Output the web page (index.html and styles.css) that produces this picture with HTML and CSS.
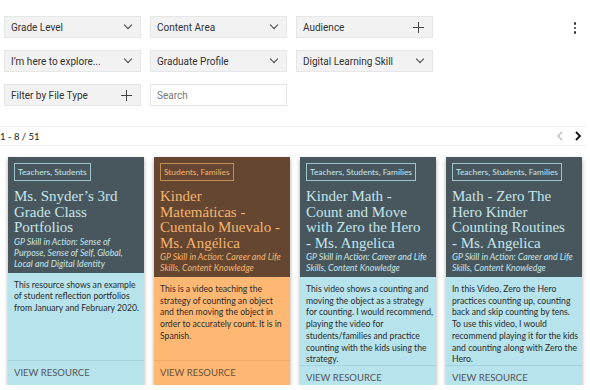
FILE: index.html
```html
<!DOCTYPE html>
<html lang="en">
<head>
  <meta charset="UTF-8">
  <meta name="viewport" content="width=device-width, initial-scale=1.0">
  <title>Resource Library</title>
  <link rel="stylesheet" href="styles.css">
</head>
<body>
  <div class="toolbar">
    <div class="filters">
      <div class="filter">Grade Level <span class="chev"></span></div>
      <div class="filter">Content Area <span class="chev"></span></div>
      <div class="filter">Audience <span class="plus"></span></div>
      <div class="filter">I’m here to explore... <span class="chev"></span></div>
      <div class="filter">Graduate Profile <span class="chev"></span></div>
      <div class="filter">Digital Learning Skill <span class="chev"></span></div>
      <div class="filter">Filter by File Type <span class="plus"></span></div>
      <input class="search" type="text" placeholder="Search">
    </div>
    <div class="kebab"><i></i><i></i><i></i></div>
  </div>

  <div class="pager">
    <span>1 - 8 / 51</span>
    <div class="arrows">
      <svg width="8" height="10" viewBox="0 0 8 10"><path d="M6 1 L2 5 L6 9" fill="none" stroke="#bbb" stroke-width="1.4"/></svg>
      <svg width="8" height="10" viewBox="0 0 8 10"><path d="M2 1 L6 5 L2 9" fill="none" stroke="#111" stroke-width="1.8"/></svg>
    </div>
  </div>

  <div class="cards">
    <div class="card">
      <div class="card-head">
        <span class="tag">Teachers, Students</span>
        <h3>Ms. Snyder’s 3rd Grade Class Portfolios</h3>
        <p class="skill">GP Skill in Action: Sense of Purpose, Sense of Self, Global, Local and Digital Identity</p>
      </div>
      <div class="card-body">
        <p>This resource shows an example of student reflection portfolios from January and February 2020.</p>
      </div>
      <div class="card-foot">VIEW RESOURCE</div>
    </div>

    <div class="card orange">
      <div class="card-head">
        <span class="tag">Students, Families</span>
        <h3>Kinder Matemáticas - Cuentalo Muevalo - Ms. Angélica</h3>
        <p class="skill">GP Skill in Action: Career and Life Skills, Content Knowledge</p>
      </div>
      <div class="card-body">
        <p>This is a video teaching the strategy of counting an object and then moving the object in order to accurately count. It is in Spanish.</p>
      </div>
      <div class="card-foot">VIEW RESOURCE</div>
    </div>

    <div class="card">
      <div class="card-head">
        <span class="tag">Teachers, Students, Families</span>
        <h3>Kinder Math - Count and Move with Zero the Hero <span class="nowrap">- Ms. Angelica</span></h3>
        <p class="skill">GP Skill in Action: Career and Life Skills, Content Knowledge</p>
      </div>
      <div class="card-body">
        <p>This video shows a counting and moving the object as a strategy for counting. I would recommend, playing the video for students/families and practice counting with the kids using the strategy.</p>
      </div>
      <div class="card-foot">VIEW RESOURCE</div>
    </div>

    <div class="card">
      <div class="card-head">
        <span class="tag">Teachers, Students, Families</span>
        <h3>Math - Zero The Hero Kinder Counting Routines <span class="nowrap">- Ms. Angelica</span></h3>
        <p class="skill">GP Skill in Action: Career and Life Skills, Content Knowledge</p>
      </div>
      <div class="card-body">
        <p>In this Video, Zero the Hero practices counting up, counting back and skip counting by tens. To use this video, I would recommend playing it for the kids and counting along with Zero the Hero.</p>
      </div>
      <div class="card-foot">VIEW RESOURCE</div>
    </div>
  </div>
</body>
</html>
```

FILE: styles.css
```css
body {
  margin: 0;
  padding: 0;
  background-color: #fff;
  color: #333;
  font-family: Roboto, Arial, sans-serif;
}

.toolbar {
  display: flex;
  justify-content: space-between;
  padding: 16px 0 0 4px;
  height: 106px;
  box-sizing: border-box;
}

.filters {
  display: grid;
  grid-template-columns: 137px 137px 137px;
  grid-auto-rows: 22px;
  column-gap: 9px;
  row-gap: 12px;
}

.filter {
  display: flex;
  align-items: center;
  justify-content: space-between;
  padding: 0 8px 0 6px;
  background-color: #f2f2f2;
  border: 1px solid #e6e6e6;
  font-size: 10px;
  color: #333;
}

.chev {
  width: 5px;
  height: 5px;
  border-right: 1.5px solid #444;
  border-bottom: 1.5px solid #444;
  transform: translateY(-2px) rotate(45deg);
  margin-right: 1px;
}

.plus {
  position: relative;
  width: 11px;
  height: 11px;
}

.plus::before,
.plus::after {
  content: "";
  position: absolute;
  background-color: #444;
}

.plus::before {
  left: 0;
  top: 5px;
  width: 11px;
  height: 1.3px;
}

.plus::after {
  left: 5px;
  top: 0;
  width: 1.3px;
  height: 11px;
}

.search {
  margin: 0;
  padding: 0 6px;
  border: 1px solid #e3e3e3;
  background-color: #fff;
  font-family: Roboto, Arial, sans-serif;
  font-size: 10px;
  color: #333;
}

.search::placeholder {
  color: #777;
}

.kebab {
  display: flex;
  flex-direction: column;
  gap: 2px;
  padding: 6px 14px 0 0;
}

.kebab i {
  display: block;
  width: 2.5px;
  height: 2.5px;
  border-radius: 50%;
  background-color: #333;
}

.pager {
  display: flex;
  justify-content: space-between;
  align-items: center;
  width: 587px;
  height: 18px;
  margin-top: 20px;
  border-top: 1px solid #eee;
  border-bottom: 1px solid #eee;
  font-family: Lato, sans-serif;
  font-size: 9.5px;
  color: #222;
}

.arrows {
  display: flex;
  gap: 10px;
  padding-right: 5px;
}

.cards {
  display: flex;
  gap: 10px;
  padding: 11px 0 0 8px;
}

.card {
  display: flex;
  flex-direction: column;
  width: 136px;
  height: 228px;
  background-color: #b6e3ec;
  box-shadow: 0 2px 4px rgba(0, 0, 0, 0.35);
  font-family: Lato, sans-serif;
}

.card-head {
  padding: 6px 8px 4px 6px;
  background-color: #47575d;
  color: #c6e5eb;
}

.tag {
  display: block;
  width: max-content;
  padding: 3px 3px;
  border: 1px solid #9fc4cb;
  font-size: 8.4px;
  line-height: 10px;
}

.card-head h3 {
  margin: 8px 0 0;
  font-family: "Liberation Serif", serif;
  font-size: 15px;
  font-weight: normal;
  line-height: 15.5px;
}

.nowrap {
  white-space: nowrap;
}

.skill {
  margin: 0;
  font-size: 8.8px;
  font-style: italic;
  line-height: 11px;
}

.card-body {
  flex: 1;
  padding: 6px 2px 0 6px;
}

.card-body p {
  margin: 0;
  font-size: 8.65px;
  line-height: 11.7px;
  color: #2b2b2b;
}

.card-foot {
  padding: 6px 6px 7px;
  border-top: 1px solid #a3d3dd;
  font-size: 9.5px;
  color: #555;
}

.orange {
  background-color: #ffb873;
}

.orange .card-head {
  background-color: #654630;
  color: #f4b470;
}

.orange .tag {
  border-color: #c08c5c;
}

.orange .card-foot {
  border-top-color: #f0aa66;
  color: #6a5038;
}
```
